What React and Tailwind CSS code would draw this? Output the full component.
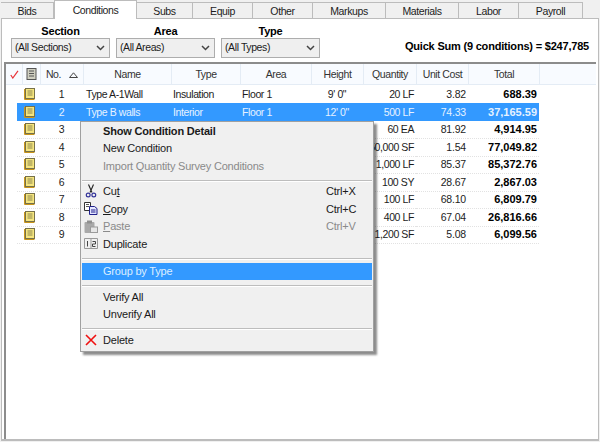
const tabs = [
  ['Bids', 'w-[53px]'],
  ['Conditions', 'w-[83px]'],
  ['Subs', 'w-[56px]'],
  ['Equip', 'w-[60px]'],
  ['Other', 'w-[60px]'],
  ['Markups', 'w-[73px]'],
  ['Materials', 'w-[73px]'],
  ['Labor', 'w-[60px]'],
  ['Payroll', 'w-[64px]'],
]

const filters = [
  ['Section', '(All Sections)'],
  ['Area', '(All Areas)'],
  ['Type', '(All Types)'],
]

const rows = [
  ['1', 'Type A-1Wall', 'Insulation', 'Floor 1', '9\' 0"', '20 LF', '3.82', '688.39'],
  ['2', 'Type B walls', 'Interior', 'Floor 1', '12\' 0"', '500 LF', '74.33', '37,165.59'],
  ['3', '', '', '', '', '60 EA', '81.92', '4,914.95'],
  ['4', '', '', '', '', '50,000 SF', '1.54', '77,049.82'],
  ['5', '', '', '', '', '1,000 LF', '85.37', '85,372.76'],
  ['6', '', '', '', '', '100 SY', '28.67', '2,867.03'],
  ['7', '', '', '', '', '100 LF', '68.10', '6,809.79'],
  ['8', '', '', '', '', '400 LF', '67.04', '26,816.66'],
  ['9', '', '', '', '', '1,200 SF', '5.08', '6,099.56'],
]

function NoteIcon() {
  return (
    <svg width="12" height="12" viewBox="0 0 12 12">
      <rect x="1.5" y="0.5" width="9" height="10" fill="#f5e57e" stroke="#77714a" />
      <path d="M3.5 3h5M3.5 5h5M3.5 7h5" stroke="#8c8650" />
      <path d="M0.5 1v10.5h10" fill="none" stroke="#c9951a" />
    </svg>
  )
}

function Chevron() {
  return (
    <svg width="9" height="6" viewBox="0 0 9 6" fill="none" stroke="#444" strokeWidth="1.5">
      <path d="M1 1l3.5 3.5L8 1" />
    </svg>
  )
}

function MenuItem({ label, shortcut, icon, bold, disabled, active }) {
  return (
    <div className={`flex h-[17.5px] items-center mx-[1px] ${active ? 'bg-[#3399ff] text-[#dceeff]' : ''} ${disabled ? 'text-[#8a8a8a]' : ''} ${bold ? 'font-bold' : ''}`}>
      <span className="w-[17px] flex justify-center shrink-0">{icon}</span>
      <span className="flex-1 pl-[4px]">{label}</span>
      {shortcut && <span className="w-[46px]">{shortcut}</span>}
    </div>
  )
}

const Sep = ({ tall }) => (
  <div className={`h-[2px] bg-[#bdbdbd] mx-[1px] mt-[5px] border-b border-white ${tall ? 'mb-[3px]' : 'mb-[1px]'}`} />
)

function ContextMenu() {
  return (
    <div className="absolute left-[80px] top-[121px] w-[294px] h-[231px] bg-[#f0f0f0] border border-[#a0a0a0] shadow-[3px_3px_2px_rgba(0,0,0,0.45)] text-[11px] tracking-[-0.2px] text-[#1a1a1a]">
      <MenuItem label="Show Condition Detail" bold />
      <MenuItem label="New Condition" />
      <MenuItem label="Import Quantity Survey Conditions" disabled />
      <Sep />
      <MenuItem
        label={<>Cu<u>t</u></>}
        shortcut="Ctrl+X"
        icon={
          <svg width="12" height="14" viewBox="0 0 12 14" fill="none">
            <path d="M3.5 0.5l3.5 8M8.5 0.5L5 8.5" stroke="#222" strokeWidth="1.1" />
            <circle cx="3.2" cy="11" r="1.9" stroke="#33339a" strokeWidth="1.2" />
            <circle cx="8.8" cy="11" r="1.9" stroke="#33339a" strokeWidth="1.2" />
          </svg>
        }
      />
      <MenuItem
        label={<><u>C</u>opy</>}
        shortcut="Ctrl+C"
        icon={
          <svg width="14" height="13" viewBox="0 0 14 13">
            <path d="M.5.5h6v8h-6z" fill="#fff" stroke="#333" />
            <path d="M2 2.5h3M2 4.5h3" stroke="#555" />
            <path d="M5.5 4.5h5l2.5 2v6h-7.5z" fill="#e4e6ff" stroke="#1f1f8a" />
            <path d="M7 8h4.5M7 10h4.5" stroke="#1f1f8a" />
          </svg>
        }
      />
      <MenuItem
        label={<><u>P</u>aste</>}
        shortcut="Ctrl+V"
        disabled
        icon={
          <svg width="14" height="13" viewBox="0 0 14 13">
            <rect x="0.5" y="2" width="10" height="11" rx="1" fill="#a9a9a9" />
            <rect x="3" y="0.5" width="5" height="3" fill="#8f8f8f" />
            <rect x="6.5" y="7" width="7" height="5.5" fill="#e6e6e6" stroke="#9a9a9a" />
          </svg>
        }
      />
      <MenuItem
        label="Duplicate"
        icon={
          <svg width="14" height="11" viewBox="0 0 14 11" fill="none" stroke="#444">
            <path d="M.5.5h13v10H.5zM7 .5v10" stroke="#999" />
            <path d="M3.5 3v5.5M8.5 3.5h3v2.5h-3v2.5h3" />
          </svg>
        }
      />
      <Sep tall />
      <MenuItem label="Group by Type" active />
      <Sep />
      <MenuItem label="Verify All" />
      <MenuItem label="Unverify All" />
      <Sep />
      <MenuItem
        label="Delete"
        icon={
          <svg width="12" height="12" viewBox="0 0 12 12" stroke="#f01010" strokeWidth="1.6" fill="none">
            <path d="M1 1l10 10M11 1L1 11" />
          </svg>
        }
      />
    </div>
  )
}

export default function App() {
  return (
    <div className="relative w-[600px] h-[442px] bg-[#f0f0f0] font-['Liberation_Sans',sans-serif] text-[10.5px] tracking-[-0.4px] text-[#1c1c1c] overflow-hidden">
      {/* Tabs */}
      <div className="flex h-[18px] pl-[1px] relative">
        {tabs.map(([name, w]) => (
          <div
            key={name}
            className={`${w} text-center border-r border-t border-[#bcbcbc] ${name === 'Conditions' ? 'bg-white h-[19px] z-10 border-l leading-[19px]' : 'bg-[#f0f0f0] mt-[2px] h-[16px] leading-[16px]'}`}
          >
            {name}
          </div>
        ))}
      </div>

      {/* Panel */}
      <div className="h-[423px] mx-[1px] bg-white border border-[#bcbcbc] border-b-2 px-[2px] flex flex-col">
        {/* Filters */}
        <div className="h-[43px] flex items-end pl-[7px] pb-[4px] gap-[6px] shrink-0">
          {filters.map(([label, value]) => (
            <div key={label} className="w-[99px]">
              <div className="text-center font-bold text-[11px] tracking-[-0.2px] leading-[14px] text-black">{label}</div>
              <div className="h-[20px] border border-[#adadad] bg-[#efefef] flex items-center justify-between pl-[3px] pr-[4px]">
                <span>{value}</span>
                <Chevron />
              </div>
            </div>
          ))}
          <div className="flex-1 text-right pr-[7px] pb-[4px] font-bold text-[11px] tracking-[-0.2px] text-black whitespace-nowrap">
            Quick Sum (9 conditions) = $247,785
          </div>
        </div>

        {/* Grid */}
        <div className="flex-1 border-l-2 border-t-2 border-[#8c8c8c]">
          <div className="grid grid-cols-[16px_18px_43px_88px_69px_71px_52px_53px_52px_71px_1fr] h-[21px] bg-[#f8fbff] items-center text-center text-[#333] border-b border-[#e4ecf5]">
            <span className="flex justify-center">
              <svg width="9" height="9" viewBox="0 0 9 9" fill="none" stroke="#e8343a" strokeWidth="1.2">
                <path d="M.8 5l2 3L8 .8" />
              </svg>
            </span>
            <span className="flex justify-center border-l border-[#e4ecf5] h-full items-center">
              <svg width="11" height="12" viewBox="0 0 11 12">
                <rect x="1" y="0.5" width="9" height="11" fill="#cfcfc0" stroke="#555" />
                <path d="M3 3h5M3 5.5h5M3 8h5" stroke="#555" />
              </svg>
            </span>
            <span className="flex items-center justify-center gap-[8px] border-l border-[#e4ecf5] h-full pt-[1px]">
              No.
              <svg width="9" height="6" viewBox="0 0 9 6" fill="none" stroke="#444">
                <path d="M.5 5.5h8L4.5.8z" />
              </svg>
            </span>
            {['Name', 'Type', 'Area', 'Height', 'Quantity', 'Unit Cost', 'Total', ''].map((h, i) => (
              <span key={i} className="border-l border-[#e4ecf5] h-full flex items-center justify-center pt-[1px]">{h}</span>
            ))}
          </div>
          {rows.map((r, i) => {
            const selected = i === 1
            return (
              <div key={r[0]} className="grid grid-cols-[11px_23px_43px_88px_69px_71px_52px_53px_52px_71px] h-[17.5px] items-center">
                <span />
                <span className={`flex justify-center items-center h-full pl-[3px] ${selected ? 'bg-[#3399ff]' : 'border-b border-dotted border-[#e2e2e2]'}`}><NoteIcon /></span>
                {[
                  [r[0], 'text-center'],
                  [r[1], 'pl-[3px]'],
                  [r[2], 'pl-[2px]'],
                  [r[3], 'pl-[2px]'],
                  [r[4], 'text-center'],
                  [r[5], 'text-right pr-[2px]'],
                  [r[6], 'text-right pr-[2px] tracking-[-0.2px]'],
                  [r[7], 'text-right font-bold text-[11px] tracking-[0px] pr-[2px] text-black'],
                ].map(([text, cls], j) => (
                  <span
                    key={j}
                    className={`${cls} h-full leading-[18px] whitespace-nowrap ${selected ? 'bg-[#3399ff] !text-[#e6f2ff]' : 'border-b border-dotted border-[#e2e2e2]'}`}
                  >
                    {text}
                  </span>
                ))}
              </div>
            )
          })}
        </div>
      </div>

      <ContextMenu />
    </div>
  )
}
